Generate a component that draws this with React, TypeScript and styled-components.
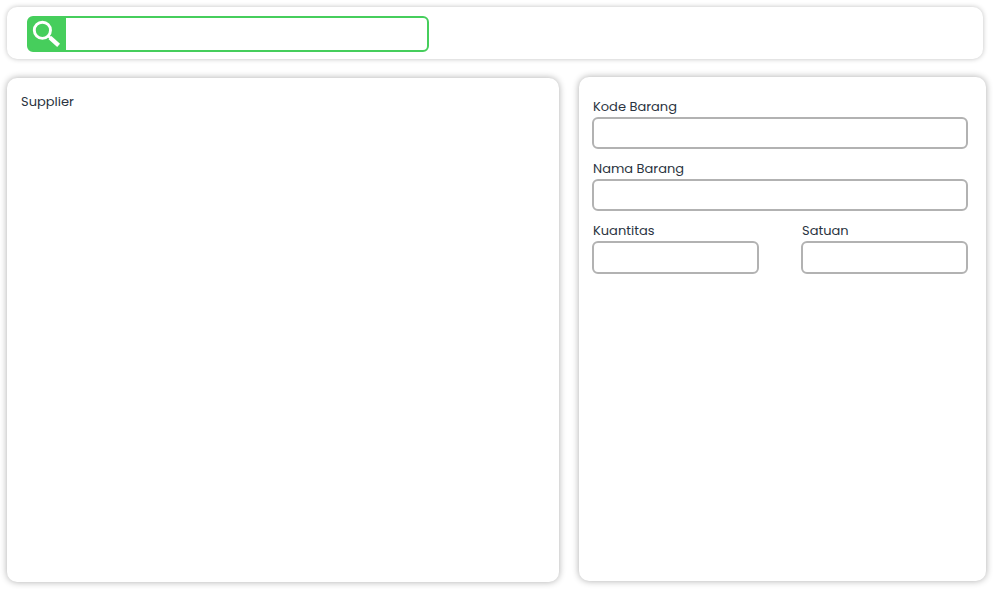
import React from "react";
import styled, { createGlobalStyle } from "styled-components";

const GlobalStyle = createGlobalStyle`
  *, *::before, *::after { box-sizing: border-box; }
  html, body { margin: 0; background: #fff; }
  body {
    overflow: hidden;
    font-family: Poppins, Inter, "Open Sans", sans-serif;
    font-size: 13px;
    color: #2b3441;
  }
`;

const Page = styled.div`
  height: 589px;
  padding: 7px;
  display: flex;
  flex-direction: column;
`;

const TopBar = styled.header`
  width: 976px;
  height: 52px;
  flex: none;
  padding: 9px 20px;
  border-radius: 10px;
  background: #fff;
  box-shadow: 0 0 5px rgba(0, 0, 0, 0.25);
`;

const SearchBox = styled.form`
  display: flex;
  width: 402px;
  height: 36px;
  border: 2px solid #46ce5c;
  border-radius: 6px;
  background: #46ce5c;
`;

const SearchButton = styled.button`
  width: 37px;
  flex: none;
  padding: 0;
  border: 0;
  background: transparent;
  svg { display: block; }
`;

const SearchInput = styled.input`
  flex: 1;
  min-width: 0;
  padding: 0 10px;
  border: 0;
  border-radius: 0 4px 4px 0;
  background: #fff;
  font: inherit;
  outline: none;
`;

const Columns = styled.main`
  display: flex;
  align-items: flex-start;
  justify-content: space-between;
  width: 979px;
  padding-top: 18px;
`;

const Panel = styled.section<{ $width: number }>`
  width: ${(p) => p.$width}px;
  height: 504px;
  border-radius: 10px;
  background: #fff;
  box-shadow: 0 0 7px rgba(0, 0, 0, 0.33);
`;

const SupplierPanel = styled(Panel)`
  margin-top: 1px;
  padding: 14px;
`;

const FormPanel = styled(Panel)`
  padding: 20px 18px 20px 13px;
  display: grid;
  grid-template-columns: 167px 167px;
  grid-template-rows: 52px 52px 53px;
  justify-content: space-between;
  row-gap: 10px;
`;

const Caption = styled.span`
  display: block;
  height: 20px;
  line-height: 20px;
  white-space: nowrap;
`;

const Field = styled.label<{ $wide?: boolean }>`
  display: flex;
  flex-direction: column;
  grid-column: ${(p) => (p.$wide ? "1 / -1" : "auto")};
  ${Caption} { margin-left: 1px; }
`;

const FieldInput = styled.input`
  width: 100%;
  min-height: 0;
  flex: 1;
  padding: 0 8px;
  border: 2px solid #b2b2b2;
  border-radius: 6px;
  background: #fff;
  font: inherit;
  outline: none;
`;

const SearchIcon = () => (
  <svg width="37" height="32" viewBox="0 0 37 32" fill="none" stroke="#fff">
    <circle cx="13.4" cy="12.3" r="8.1" strokeWidth="2.9" />
    <path d="M19 17.6 L22 20.5" strokeWidth="2.6" />
    <path d="M21 19.6 L29.6 27.4" strokeWidth="4.2" />
  </svg>
);

const fields = [
  { caption: "Kode Barang", wide: true },
  { caption: "Nama Barang", wide: true },
  { caption: "Kuantitas", wide: false },
  { caption: "Satuan", wide: false },
];

export default function App() {
  return (
    <>
      <GlobalStyle />
      <Page>
        <TopBar>
          <SearchBox>
            <SearchButton type="button" aria-label="Search">
              <SearchIcon />
            </SearchButton>
            <SearchInput />
          </SearchBox>
        </TopBar>
        <Columns>
          <SupplierPanel $width={552}>
            <Caption>Supplier</Caption>
          </SupplierPanel>
          <FormPanel $width={407}>
            {fields.map((f) => (
              <Field key={f.caption} $wide={f.wide}>
                <Caption>{f.caption}</Caption>
                <FieldInput />
              </Field>
            ))}
          </FormPanel>
        </Columns>
      </Page>
    </>
  );
}
